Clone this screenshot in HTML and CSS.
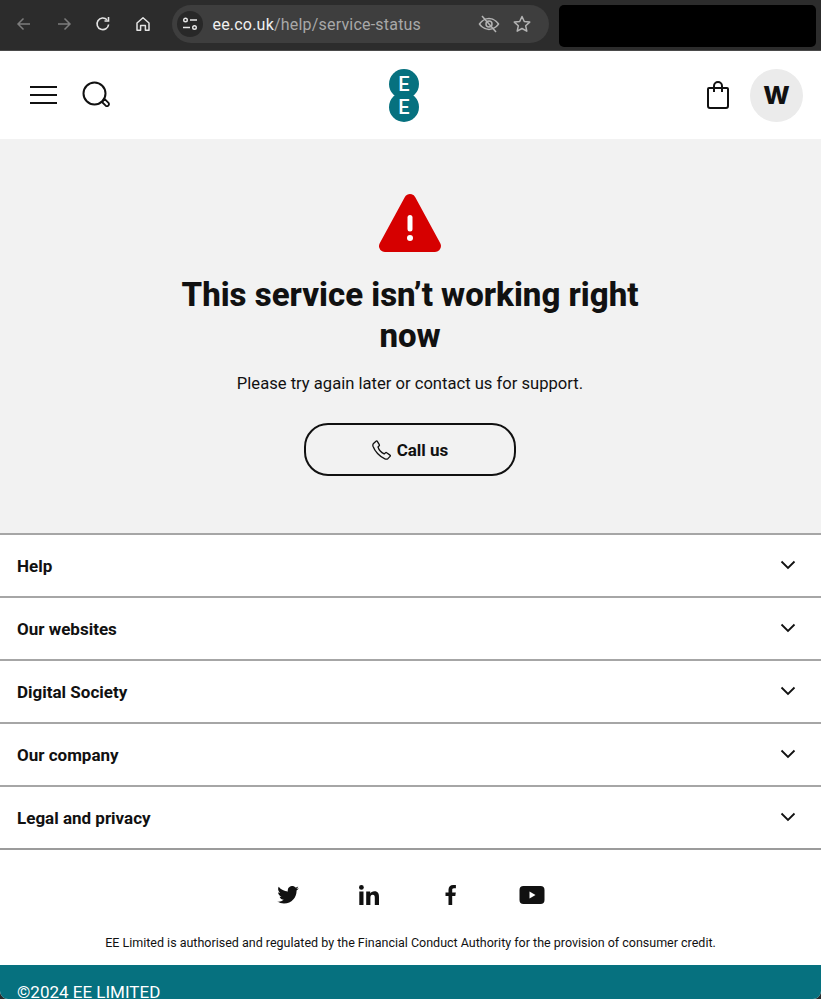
FILE: index.html
```html
<!DOCTYPE html>
<html lang="en">

<head>
    <meta charset="UTF-8">
    <meta name="viewport" content="width=device-width, initial-scale=1.0">
    <title>Service status - EE</title>
    <link rel="stylesheet" href="styles.css">
</head>

<body>
    <div class="window">
        <div class="browser-bar">
            <svg class="tool tool-first" width="16" height="16" viewBox="0 0 16 16" fill="none" stroke="#7c7c7c" stroke-width="1.5"><path d="M14 8H2.5M7.5 2.5 2 8l5.5 5.5" /></svg>
            <svg class="tool" width="16" height="16" viewBox="0 0 16 16" fill="none" stroke="#7c7c7c" stroke-width="1.5"><path d="M2 8h11.500M8.500 2.500 14 8l-5.500 5.500" /></svg>
            <svg class="tool" width="16" height="16" viewBox="0 0 16 16" fill="none" stroke="#e4e4e4" stroke-width="1.6"><path d="M13.600 8.500A5.800 5.800 0 1 1 12 3.800" /><path d="M13.500 1v4h-4" /></svg>
            <svg class="tool" width="16" height="16" viewBox="0 0 16 16" fill="none" stroke="#e4e4e4" stroke-width="1.5" stroke-linejoin="round"><path d="M2 7 8 1.800 14 7v7.200h-3.600V9.500H5.600v4.700H2z" /></svg>
            <div class="url-box">
                <span class="site-info">
                    <svg width="16" height="14" viewBox="0 0 16 14" fill="none" stroke="#e8e8e8" stroke-width="1.400"><circle cx="3.500" cy="3" r="1.800" /><path d="M8 3h7M1 10.500h7" /><circle cx="12.500" cy="10.500" r="1.800" /></svg>
                </span>
                <span class="url"><b>ee.co.uk</b>/help/service-status</span>
                <svg class="url-icon" width="22" height="20" viewBox="0 0 22 20" fill="none" stroke="#b4b4b4" stroke-width="1.500"><path d="M1.500 10S5 4.500 11 4.500 20.500 10 20.500 10 17 15.500 11 15.500 1.500 10 1.500 10z" /><circle cx="11" cy="10" r="3" /><path d="M4 2l14 16" /></svg>
                <svg class="url-icon" width="18" height="18" viewBox="0 0 18 18" fill="none" stroke="#b4b4b4" stroke-width="1.500" stroke-linejoin="round"><path d="M9 1.500l2.300 5 5.400.6-4 3.700 1.100 5.400L9 13.500l-4.800 2.700 1.100-5.400-4-3.700 5.400-.6z" /></svg>
            </div>
            <div class="redacted"></div>
        </div>

        <header class="site-header">
            <div class="header-left">
                <svg width="28" height="20" viewBox="0 0 28 20" fill="none" stroke="#111" stroke-width="2"><path d="M0 2h27M0 10h27M0 18h27" /></svg>
                <svg width="28" height="28" viewBox="0 0 28 28" fill="none" stroke="#111" stroke-width="2"><circle cx="12.500" cy="12.500" r="11" /><path d="M20 21l2.800-2.800 3.700 3.700a2 2 0 0 1-2.800 2.800z" stroke-width="1.800" stroke-linejoin="round" /></svg>
            </div>
            <div class="logo">
                <span class="logo-e">E</span>
                <span class="logo-e logo-e-low">E</span>
            </div>
            <div class="header-right">
                <svg width="22" height="28" viewBox="0 0 22 28" fill="none" stroke="#111" stroke-width="2" stroke-linejoin="round"><path d="M2 7h18a1 1 0 0 1 1 1v17a2 2 0 0 1-2 2H3a2 2 0 0 1-2-2V8a1 1 0 0 1 1-1z" /><path d="M7 11V5a4 4 0 0 1 8 0v6" /></svg>
                <span class="avatar">W</span>
            </div>
        </header>

        <main class="status">
            <svg class="warning" width="64" height="62" viewBox="0 0 64 62"><path d="M32 8 7 54H57Z" fill="#d60000" stroke="#d60000" stroke-width="12" stroke-linejoin="round" /><rect x="29.500" y="23" width="5" height="16.500" rx="2.500" fill="#fff" /><circle cx="32" cy="46" r="3" fill="#fff" /></svg>
            <h1>This service isn’t working right now</h1>
            <p>Please try again later or contact us for support.</p>
            <a class="call-btn" href="#">
                <svg width="20" height="20" viewBox="0 0 20 20" fill="none" stroke="#111" stroke-width="1.300" stroke-linejoin="round"><path d="M1.500 3.500 4 1.200c.5-.4 1-.3 1.300.2l2 3.300c.2.400.2.800-.1 1.100L6 7c.8 2.600 3.300 5.500 6.200 6.900l1.300-1.100c.3-.3.800-.3 1.200 0l3.300 2.300c.5.300.5.900.1 1.300l-2 2c-.8.700-2 .9-3.200.4C7.500 16.800 2.700 11 1 6.300c-.3-1-.2-2 .5-2.800z" /></svg>
                Call us
            </a>
        </main>

        <section class="footer-links">
            <div class="link-row"><span>Help</span><svg class="chev" width="16" height="10" viewBox="0 0 16 10" fill="none" stroke="#111" stroke-width="1.800"><path d="M1.500 1.500 8 8l6.500-6.500" /></svg></div>
            <div class="link-row"><span>Our websites</span><svg class="chev" width="16" height="10" viewBox="0 0 16 10" fill="none" stroke="#111" stroke-width="1.800"><path d="M1.500 1.500 8 8l6.500-6.500" /></svg></div>
            <div class="link-row"><span>Digital Society</span><svg class="chev" width="16" height="10" viewBox="0 0 16 10" fill="none" stroke="#111" stroke-width="1.800"><path d="M1.500 1.500 8 8l6.500-6.500" /></svg></div>
            <div class="link-row"><span>Our company</span><svg class="chev" width="16" height="10" viewBox="0 0 16 10" fill="none" stroke="#111" stroke-width="1.800"><path d="M1.500 1.500 8 8l6.500-6.500" /></svg></div>
            <div class="link-row"><span>Legal and privacy</span><svg class="chev" width="16" height="10" viewBox="0 0 16 10" fill="none" stroke="#111" stroke-width="1.800"><path d="M1.500 1.500 8 8l6.500-6.500" /></svg></div>
        </section>

        <div class="social">
            <svg class="twitter" width="22" height="18" viewBox="0 0 24 20" fill="#111"><path d="M24 2.400c-.9.400-1.800.7-2.800.8 1-.6 1.800-1.600 2.200-2.700-1 .6-2 1-3.100 1.200A4.900 4.900 0 0 0 11.900 6.200C7.800 6 4.100 4 1.700.9c-1.300 2.200-.7 5.100 1.500 6.600-.8 0-1.600-.2-2.200-.6 0 2.400 1.700 4.400 3.900 4.900-.7.200-1.500.2-2.200.1.600 2 2.400 3.400 4.600 3.400A9.900 9.900 0 0 1 0 17.300 14 14 0 0 0 7.500 19.500c9.100 0 14.300-7.700 14-14.600 1-.7 1.800-1.500 2.500-2.500z" /></svg>
            <svg width="20" height="20" viewBox="0 0 20 20" fill="#111"><circle cx="2.400" cy="2.400" r="2.400" /><rect x=".3" y="6.500" width="4.200" height="13.500" /><path d="M7.200 6.500h4v1.900c.7-1.200 2.200-2.200 4.200-2.200 3.800 0 4.600 2.500 4.600 5.800V20h-4.200v-7c0-1.700-.1-3.300-2.100-3.300s-2.300 1.600-2.300 3.200V20H7.200z" /></svg>
            <svg width="12" height="20" viewBox="0 0 12 20" fill="#111"><path d="M3.500 20V11H.5V7.400h3V4.700C3.500 1.600 5.400 0 8.100 0c1.300 0 2.400.1 2.800.1v3.200H9c-1.500 0-1.800.7-1.800 1.800v2.300h3.600L10.300 11H7.200v9z" /></svg>
            <svg width="26" height="20" viewBox="0 0 26 20" fill="#111"><path d="M4.500 1h17A4 4 0 0 1 25.500 5v10a4 4 0 0 1-4 4h-17a4 4 0 0 1-4-4V5a4 4 0 0 1 4-4z" /><path d="M10.500 6.500v7l6-3.500z" fill="#fff" /></svg>
        </div>

        <p class="legal">EE Limited is authorised and regulated by the Financial Conduct Authority for the provision of consumer credit.</p>

        <footer class="copyright">©2024 EE LIMITED</footer>
    </div>
</body>

</html>
```

FILE: styles.css
```css
html,
body {
    margin: 0;
    height: 999px;
    overflow: hidden;
    background-color: #2a2a2a;
}

body {
    font-family: Roboto, "Noto Sans", sans-serif;
    color: #111;
}

.window {
    height: 999px;
    overflow: hidden;
    background-color: #fff;
    border-radius: 0 0 8px 8px;
}

.browser-bar {
    height: 51px;
    box-sizing: border-box;
    border-bottom: 1px solid #4a4a4a;
    background-color: #2c2c2c;
    display: flex;
    align-items: center;
    padding: 0 5px 2px 0;
}

.tool {
    margin-right: 23.500px;
    flex-shrink: 0;
}

.tool-first {
    margin-left: 16px;
}

.url-box {
    width: 377px;
    height: 38px;
    margin-left: -2.500px;
    border-radius: 19px;
    background-color: #3e3e3e;
    display: flex;
    align-items: center;
    padding: 0 18px 0 5px;
    box-sizing: border-box;
}

.site-info {
    width: 26px;
    height: 26px;
    border-radius: 50%;
    background-color: #282828;
    display: flex;
    align-items: center;
    justify-content: center;
}

.url {
    flex: 1;
    margin-left: 10px;
    font-size: 16px;
    letter-spacing: 0.2px;
    color: #a8a8a8;
}

.url b {
    font-weight: 400;
    color: #f0f0f0;
}

.url-icon {
    margin-left: 13px;
}

.redacted {
    width: 257px;
    height: 42px;
    margin: 4px 0 0 10px;
    border-radius: 5px;
    background-color: #000;
}

.site-header {
    height: 88px;
    display: flex;
    align-items: center;
    justify-content: space-between;
    padding: 0 18px 0 30px;
}

.header-left {
    width: 175px;
    display: flex;
    align-items: center;
    gap: 24px;
}

.logo {
    display: flex;
    flex-direction: column;
    align-items: center;
}

.logo-e {
    width: 30px;
    height: 30px;
    border-radius: 50%;
    background-color: #06717f;
    color: #fff;
    font-size: 20px;
    font-weight: 500;
    line-height: 30px;
    text-align: center;
}

.logo-e-low {
    margin-top: -7px;
}

.header-right {
    width: 200px;
    display: flex;
    align-items: center;
    justify-content: flex-end;
    gap: 21px;
}

.avatar {
    width: 53px;
    height: 53px;
    border-radius: 50%;
    background-color: #ebebeb;
    font-family: Inter, sans-serif;
    font-size: 25px;
    font-weight: 800;
    line-height: 53px;
    text-align: center;
}

.status {
    height: 394px;
    box-sizing: border-box;
    background-color: #f2f2f2;
    padding: 53px 1px 0 0;
    display: flex;
    flex-direction: column;
    align-items: center;
    text-align: center;
}

.warning {
    display: block;
}

.status h1 {
    width: 480px;
    margin: 20px 0 0;
    font-size: 33px;
    font-weight: 800;
    line-height: 41px;
}

.status p {
    margin: 16px 0 0;
    font-size: 16.600px;
    line-height: 24px;
}

.call-btn {
    width: 212px;
    height: 53px;
    box-sizing: border-box;
    margin-top: 27px;
    border: 2px solid #111;
    border-radius: 24px;
    display: flex;
    align-items: center;
    justify-content: center;
    gap: 5px;
    font-size: 17px;
    font-weight: 700;
    color: #111;
    text-decoration: none;
}

.link-row {
    height: 63px;
    box-sizing: border-box;
    border-top: 2px solid #a6a6a6;
    display: flex;
    align-items: center;
    justify-content: space-between;
    padding: 0 25px 0 17px;
    font-size: 17px;
    font-weight: 700;
}

.chev {
    margin-top: -2px;
}

.social {
    height: 85px;
    box-sizing: border-box;
    border-top: 2px solid #9b9b9b;
    padding: 35px 1px 0 0;
    display: grid;
    grid-template-columns: repeat(4, 81.500px);
    align-items: start;
    justify-items: center;
    justify-content: center;
}

.twitter {
    margin-top: 1px;
}

.legal {
    margin: 0;
    height: 32px;
    font-size: 12.500px;
    line-height: 20px;
    text-align: center;
}

.copyright {
    height: 60px;
    box-sizing: border-box;
    background-color: #06717f;
    color: #fff;
    font-size: 17px;
    line-height: 20px;
    padding: 17px 0 0 17px;
}
```
